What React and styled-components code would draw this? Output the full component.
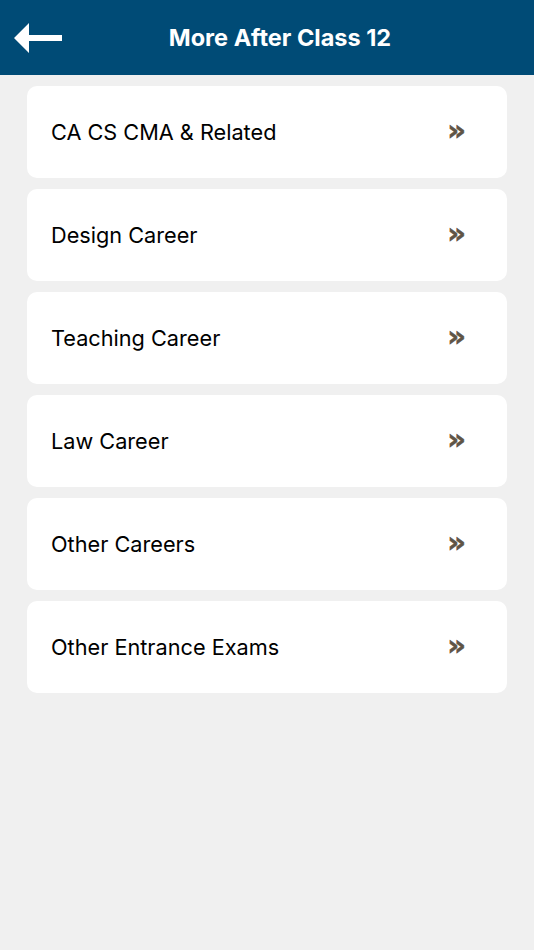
import React from "react";
import styled, { createGlobalStyle } from "styled-components";

const Global = createGlobalStyle`
  html, body { margin: 0; padding: 0; background: #f0f0f0; }
  body { font-family: Inter, "Noto Sans", sans-serif; -webkit-font-smoothing: antialiased; }
`;

const Page = styled.div`
  min-height: 950px;
  background: #f0f0f0;
`;

const Header = styled.header`
  height: 75px;
  background: #004b76;
  display: flex;
  align-items: center;
`;

const BackButton = styled.button`
  border: none;
  background: transparent;
  padding: 0;
  margin-left: 14px;
  width: 48px;
  height: 32px;
  display: flex;
  align-items: center;
  cursor: pointer;
`;

const Title = styled.h1`
  flex: 1;
  margin: 0;
  padding-right: 36px;
  text-align: center;
  color: #ffffff;
  font-size: 23.5px;
  font-weight: 700;
`;

const List = styled.div`
  display: flex;
  flex-direction: column;
  gap: 11px;
  padding: 11px 27px 0 27px;
`;

const Card = styled.div`
  height: 92px;
  background: #ffffff;
  border-radius: 10px;
  display: flex;
  align-items: center;
  justify-content: space-between;
  padding: 0 41px 0 24px;
  box-sizing: border-box;
`;

const Label = styled.span`
  font-size: 21.7px;
  color: #000000;
  font-weight: 400;
`;

const Chevron = styled.span`
  font-family: "DejaVu Sans", sans-serif;
  font-size: 29px;
  font-weight: 700;
  color: #5f5446;
  line-height: 1;
  margin-top: -3px;
  -webkit-text-stroke: 0.6px #5f5446;
`;

const items = [
  "CA CS CMA & Related",
  "Design Career",
  "Teaching Career",
  "Law Career",
  "Other Careers",
  "Other Entrance Exams",
];

export default function App() {
  return (
    <Page>
      <Global />
      <Header>
        <BackButton aria-label="Back">
          <svg width="48" height="32" viewBox="0 0 48 32">
            <polygon points="0,16 15,1 15,13 48,13 48,19 15,19 15,31" fill="#ffffff" />
          </svg>
        </BackButton>
        <Title>More After Class 12</Title>
      </Header>
      <List>
        {items.map((t) => (
          <Card key={t}>
            <Label>{t}</Label>
            <Chevron>»</Chevron>
          </Card>
        ))}
      </List>
    </Page>
  );
}
